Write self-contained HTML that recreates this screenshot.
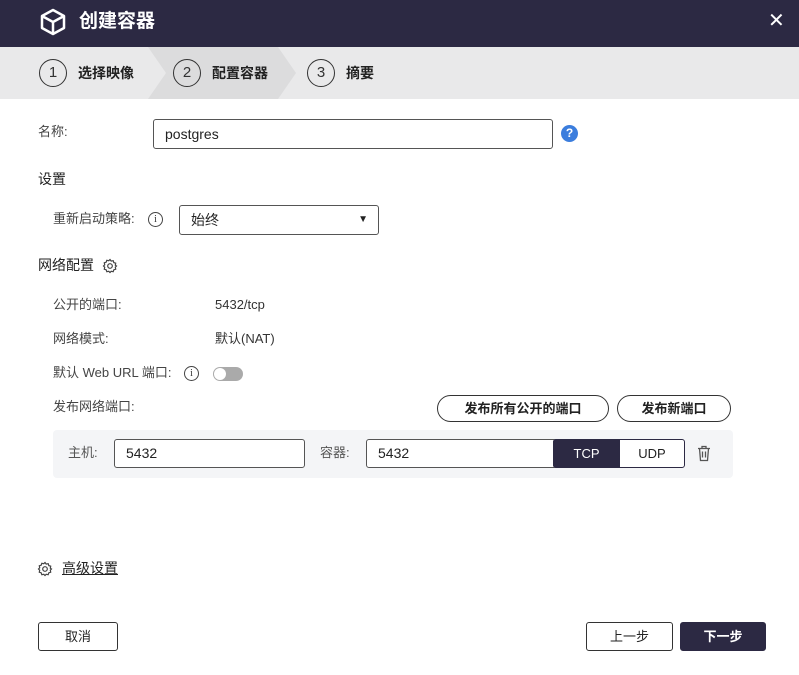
<!DOCTYPE html>
<html><head><meta charset="utf-8"><style>
*{box-sizing:border-box;margin:0;padding:0}
body{width:799px;height:675px;background:#fff;font-family:"Liberation Sans","Noto Sans CJK SC",sans-serif;font-size:13px;color:#333;position:relative;overflow:hidden;line-height:1.15}
.a{position:absolute}
.hdr{left:0;top:0;width:799px;height:47px;background:#2c2943}
.steps{left:0;top:47px;width:799px;height:52px;background:#e9e9ea}
.circ{width:28px;height:28px;border:1.5px solid #333;border-radius:50%;text-align:center;line-height:26px;font-size:15px;color:#333}
.st{font-size:14px;color:#222;font-weight:bold}
.lbl{color:#444;font-size:13px}
.inp{border:1px solid #555;border-radius:3px;background:#fff;font-size:14px;color:#222;padding-left:11px}
.pill{border:1px solid #333;border-radius:14px;text-align:center;font-size:13px;font-weight:bold;color:#222;background:#fff}
.btn{border:1px solid #333;border-radius:3px;text-align:center;font-size:13px;background:#fff;color:#222}
</style></head><body>
<div class="a hdr"></div>
<svg class="a" style="left:38px;top:7px" width="30" height="30" viewBox="0 0 30 30" fill="none" stroke="#fff" stroke-width="2.5" stroke-linejoin="round"><path d="M15 3 L26 9 V21 L15 27 L4 21 V9 Z M4 9 L15 15 L26 9 M15 15 V27"/></svg>
<div class="a" style="left:79px;top:11px;color:#fff;font-size:19px;font-weight:bold">创建容器</div>
<div class="a" style="left:768px;top:10px;color:#fff;font-size:20px">✕</div>
<div class="a steps"></div>
<svg class="a" style="left:0;top:47px" width="799" height="52"><polygon points="148,0 278,0 296,26 278,52 148,52 166,26" fill="#dcdcdd"/></svg>
<div class="a circ" style="left:39px;top:59px">1</div><div class="a st" style="left:78px;top:65px">选择映像</div>
<div class="a circ" style="left:173px;top:59px">2</div><div class="a st" style="left:212px;top:65px">配置容器</div>
<div class="a circ" style="left:307px;top:59px">3</div><div class="a st" style="left:346px;top:65px">摘要</div>
<div class="a lbl" style="left:38px;top:125px">名称:</div>
<div class="a inp" style="left:153px;top:119px;width:400px;height:30px;line-height:28px">postgres</div>
<div class="a" style="left:561px;top:125px;width:17px;height:17px;border-radius:50%;background:#3b7ddd;color:#fff;font-size:12px;font-weight:bold;text-align:center;line-height:17px">?</div>
<div class="a" style="left:38px;top:171px;font-size:14px;color:#222">设置</div>
<div class="a lbl" style="left:53px;top:212px">重新启动策略:</div>
<div class="a" style="left:148px;top:212px;width:15px;height:15px;border:1px solid #444;border-radius:50%;font-size:10px;text-align:center;line-height:13px;font-family:'Liberation Serif',serif">i</div>
<div class="a inp" style="left:179px;top:205px;width:200px;height:30px;line-height:28px">始终<span style="position:absolute;right:10px;top:0;font-size:10px">▼</span></div>
<div class="a" style="left:38px;top:257px;font-size:14px;color:#222">网络配置</div>
<svg class="a" style="left:102px;top:258px" width="16" height="16" viewBox="0 0 16 16" fill="none" stroke="#444" stroke-width="1.2"><path d="M8 1.5l1.2 1.6 2-.4.6 1.9 1.9.6-.4 2L14.5 8l-1.2 1.2.4 2-1.9.6-.6 1.9-2-.4L8 14.5l-1.2-1.2-2 .4-.6-1.9-1.9-.6.4-2L1.5 8l1.2-1.2-.4-2 1.9-.6.6-1.9 2 .4z"/><circle cx="8" cy="8" r="2.3"/></svg>
<div class="a lbl" style="left:53px;top:298px">公开的端口:</div><div class="a lbl" style="left:215px;top:298px;color:#333">5432/tcp</div>
<div class="a lbl" style="left:53px;top:332px">网络模式:</div><div class="a lbl" style="left:215px;top:332px;color:#333">默认(NAT)</div>
<div class="a lbl" style="left:53px;top:366px">默认 Web URL 端口:</div>
<div class="a" style="left:184px;top:366px;width:15px;height:15px;border:1px solid #444;border-radius:50%;font-size:10px;text-align:center;line-height:13px;font-family:'Liberation Serif',serif">i</div>
<div class="a" style="left:213px;top:367px;width:30px;height:14px;border-radius:7px;background:#aaa"></div>
<div class="a" style="left:214px;top:368px;width:12px;height:12px;border-radius:50%;background:#fff"></div>
<div class="a lbl" style="left:53px;top:400px">发布网络端口:</div>
<div class="a pill" style="left:437px;top:395px;width:172px;height:27px;line-height:25px">发布所有公开的端口</div>
<div class="a pill" style="left:617px;top:395px;width:114px;height:27px;line-height:25px">发布新端口</div>
<div class="a" style="left:53px;top:430px;width:680px;height:48px;background:#f4f5f7;border-radius:4px"></div>
<div class="a lbl" style="left:68px;top:446px;color:#555">主机:</div>
<div class="a inp" style="left:114px;top:439px;width:191px;height:29px;line-height:27px">5432</div>
<div class="a lbl" style="left:320px;top:446px;color:#555">容器:</div>
<div class="a inp" style="left:366px;top:439px;width:191px;height:29px;line-height:27px">5432</div>
<div class="a" style="left:553px;top:439px;width:132px;height:29px;border:1px solid #2c2943;border-radius:3px;background:#fff"></div>
<div class="a" style="left:553px;top:439px;width:67px;height:29px;background:#2c2943;color:#fff;text-align:center;line-height:29px;border-radius:3px 0 0 3px">TCP</div>
<div class="a" style="left:620px;top:439px;width:64px;height:29px;text-align:center;line-height:29px;color:#222">UDP</div>
<svg class="a" style="left:697px;top:445px" width="14" height="17" viewBox="0 0 14 17" fill="none" stroke="#555" stroke-width="1.3"><path d="M1 3.5h12M5 3.5V1.5h4v2M2.5 3.5l1 12h7l1-12M5.5 6.5v6M8.5 6.5v6"/></svg>
<svg class="a" style="left:37px;top:561px" width="16" height="16" viewBox="0 0 16 16" fill="none" stroke="#444" stroke-width="1.2"><path d="M8 1.5l1.2 1.6 2-.4.6 1.9 1.9.6-.4 2L14.5 8l-1.2 1.2.4 2-1.9.6-.6 1.9-2-.4L8 14.5l-1.2-1.2-2 .4-.6-1.9-1.9-.6.4-2L1.5 8l1.2-1.2-.4-2 1.9-.6.6-1.9 2 .4z"/><circle cx="8" cy="8" r="2.3"/></svg>
<div class="a" style="left:62px;top:560px;font-size:14px;color:#222;text-decoration:underline">高级设置</div>
<div class="a btn" style="left:38px;top:622px;width:80px;height:29px;line-height:27px">取消</div>
<div class="a btn" style="left:586px;top:622px;width:87px;height:29px;line-height:27px">上一步</div>
<div class="a btn" style="left:680px;top:622px;width:86px;height:29px;line-height:27px;background:#2c2943;color:#fff;font-weight:bold;border-color:#2c2943">下一步</div>
</body></html>
